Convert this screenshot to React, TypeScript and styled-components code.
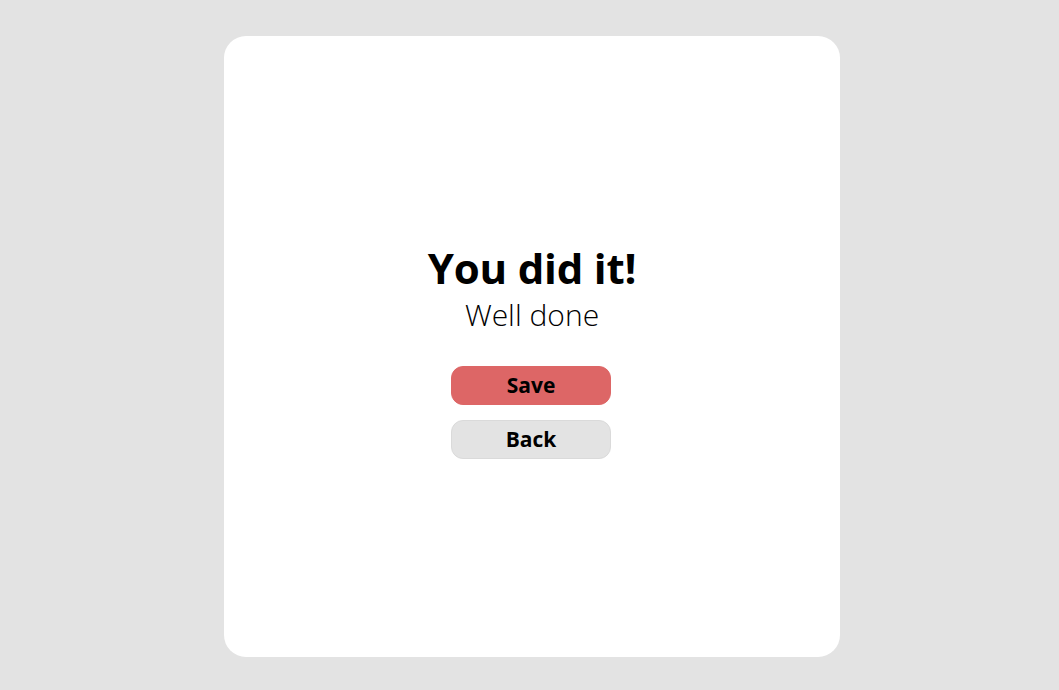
import React from "react";
import styled, { createGlobalStyle } from "styled-components";

const Global = createGlobalStyle`
  html, body { margin: 0; padding: 0; background: #e3e3e3; }
  body { font-family: "Open Sans", "Noto Sans", sans-serif; color: #000; }
`;

const Page = styled.div`
  display: flex;
  justify-content: center;
  padding: 36px 0 33px 5px;
  height: 690px;
  box-sizing: border-box;
`;

const Card = styled.div`
  width: 616px;
  height: 621px;
  background: #fff;
  border-radius: 22px;
  display: flex;
  flex-direction: column;
  align-items: center;
  justify-content: center;
  padding-top: 8px;
  box-sizing: border-box;
`;

const Title = styled.h1`
  margin: 0;
  font-size: 42px;
  font-weight: 700;
  line-height: 50px;
  letter-spacing: -0.2px;
`;

const Subtitle = styled.p`
  margin: 4px 0 0;
  font-size: 30px;
  font-weight: 300;
  line-height: 36px;
`;

const Actions = styled.div`
  display: flex;
  flex-direction: column;
  gap: 15px;
  margin: 33px 2px 0 0;
`;

const Button = styled.button<{ $variant: "primary" | "secondary" }>`
  width: 160px;
  height: 39px;
  border-radius: 12px;
  border: 1px solid ${(p) => (p.$variant === "primary" ? "#dd6666" : "#dadada")};
  background: ${(p) => (p.$variant === "primary" ? "#dd6666" : "#e3e3e3")};
  font-family: "Open Sans", "Noto Sans", sans-serif;
  font-size: 21px;
  font-weight: 700;
  color: #000;
  padding: 0;
  cursor: pointer;
`;

export default function App() {
  return (
    <>
      <Global />
      <Page>
        <Card>
          <Title>You did it!</Title>
          <Subtitle>Well done</Subtitle>
          <Actions>
            <Button $variant="primary">Save</Button>
            <Button $variant="secondary">Back</Button>
          </Actions>
        </Card>
      </Page>
    </>
  );
}
